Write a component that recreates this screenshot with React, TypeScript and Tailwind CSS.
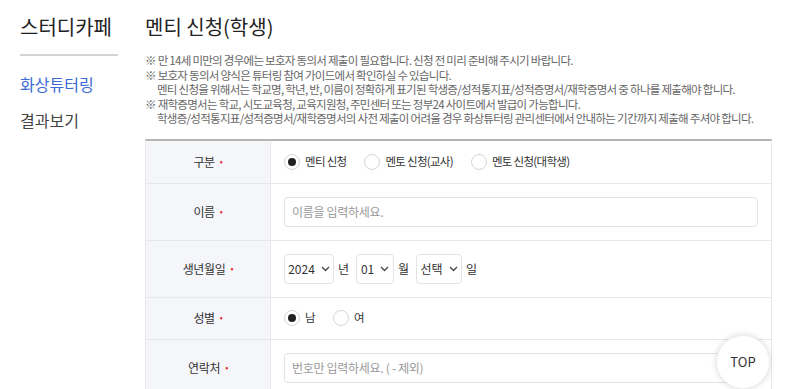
import React from "react";

const font = { fontFamily: '"Noto Sans CJK KR", "Noto Sans", sans-serif' };

function Req() {
  return <span className="ml-[5px] text-[#e52d2d] text-[9px]">•</span>;
}

function Radio({ checked, label }: { checked?: boolean; label: string }) {
  return (
    <label className="flex items-center gap-[5px] mr-[18px]">
      <span className="w-[16px] h-[16px] rounded-full border border-[#d6d6d6] bg-white flex items-center justify-center">
        {checked && <span className="w-[8px] h-[8px] rounded-full bg-[#222]" />}
      </span>
      <span className="text-[11.5px] text-[#333] tracking-[-0.7px]">{label}</span>
    </label>
  );
}

function Chevron() {
  return (
    <svg width="9" height="6" viewBox="0 0 9 6" className="ml-[6px]">
      <path d="M1 1 L4.5 4.5 L8 1" fill="none" stroke="#444" strokeWidth="1.3" />
    </svg>
  );
}

function Select({ value, w }: { value: string; w: string }) {
  return (
    <div className={`${w} h-[30px] border border-[#e3e3e3] rounded-[4px] flex items-center justify-center text-[12px] text-[#333]`}>
      {value}
      <Chevron />
    </div>
  );
}

function Row({ label, h, children }: { label: string; h: string; children: React.ReactNode }) {
  return (
    <div className={`flex ${h} border-b border-[#e8e8e8]`}>
      <div className="w-[125px] shrink-0 bg-[#f5f6fa] border-r border-[#e8e8e8] flex items-center justify-center text-[12px] text-[#333] tracking-[-0.3px]">
        <span>{label}</span>
        <Req />
      </div>
      <div className="flex-1 flex items-center pl-[13px] pr-[13px]">{children}</div>
    </div>
  );
}

function Unit({ t }: { t: string }) {
  return <span className="ml-[4px] mr-[7px] text-[12px] text-[#333]">{t}</span>;
}

export default function App() {
  return (
    <div className="w-[800px] h-[389px] overflow-hidden bg-white relative" style={font}>
      <div className="flex">
        <div className="w-[118px] pl-[20px] shrink-0 pt-[13px]">
          <div className="text-[20px] text-[#222] leading-[28px]">스터디카페</div>
          <div className="mt-[13px] h-[2px] bg-[#d4d4d4]" />
          <div className="mt-[16px] text-[16px] text-[#3b6bd4] leading-[24px]">화상튜터링</div>
          <div className="mt-[12px] text-[16px] text-[#444] leading-[24px]">결과보기</div>
        </div>
        <div className="ml-[27px] w-[627px] pt-[13px]">
          <div className="text-[20px] text-[#222] leading-[28px]">멘티 신청(학생)</div>
          <div className="mt-[12px] text-[11.5px] text-[#666] leading-[14.5px] tracking-[-0.72px] whitespace-nowrap">
            <div>※ 만 14세 미만의 경우에는 보호자 동의서 제출이 필요합니다. 신청 전 미리 준비해 주시기 바랍니다.</div>
            <div>※ 보호자 동의서 양식은 튜터링 참여 가이드에서 확인하실 수 있습니다.</div>
            <div className="pl-[12px]">멘티 신청을 위해서는 학교명, 학년, 반, 이름이 정확하게 표기된 학생증/성적통지표/성적증명서/재학증명서 중 하나를 제출해야 합니다.</div>
            <div>※ 재학증명서는 학교, 시도교육청, 교육지원청, 주민센터 또는 정부24 사이트에서 발급이 가능합니다.</div>
            <div className="pl-[12px]">학생증/성적통지표/성적증명서/재학증명서의 사전 제출이 어려울 경우 화상튜터링 관리센터에서 안내하는 기간까지 제출해 주셔야 합니다.</div>
          </div>
          <div className="mt-[13px] border-t-2 border-[#b5b5b5] border-l border-r border-l-[#e8e8e8] border-r-[#e8e8e8]">
            <Row label="구분" h="h-[43px]">
              <Radio checked label="멘티 신청" />
              <Radio label="멘토 신청(교사)" />
              <Radio label="멘토 신청(대학생)" />
            </Row>
            <Row label="이름" h="h-[57px]">
              <div className="w-full h-[30px] border border-[#e3e3e3] rounded-[4px] flex items-center px-[7px] text-[12px] text-[#999] tracking-[-0.3px]">
                이름을 입력하세요.
              </div>
            </Row>
            <Row label="생년월일" h="h-[57px]">
              <Select value="2024" w="w-[50px]" />
              <Unit t="년" />
              <Select value="01" w="w-[38px]" />
              <Unit t="월" />
              <Select value="선택" w="w-[46px]" />
              <Unit t="일" />
            </Row>
            <Row label="성별" h="h-[42px]">
              <Radio checked label="남" />
              <Radio label="여" />
            </Row>
            <Row label="연락처" h="h-[57px]">
              <div className="w-full h-[30px] border border-[#e3e3e3] rounded-[4px] flex items-center px-[7px] text-[12px] text-[#999] tracking-[-0.3px]">
                번호만 입력하세요. ( - 제외)
              </div>
            </Row>
          </div>
        </div>
      </div>
      <div className="absolute left-[716px] top-[335px] w-[54px] h-[54px] rounded-full bg-white shadow-[0_0_6px_rgba(0,0,0,0.15)] border border-[#eee] flex items-center justify-center text-[13px] text-[#333]">
        TOP
      </div>
    </div>
  );
}
